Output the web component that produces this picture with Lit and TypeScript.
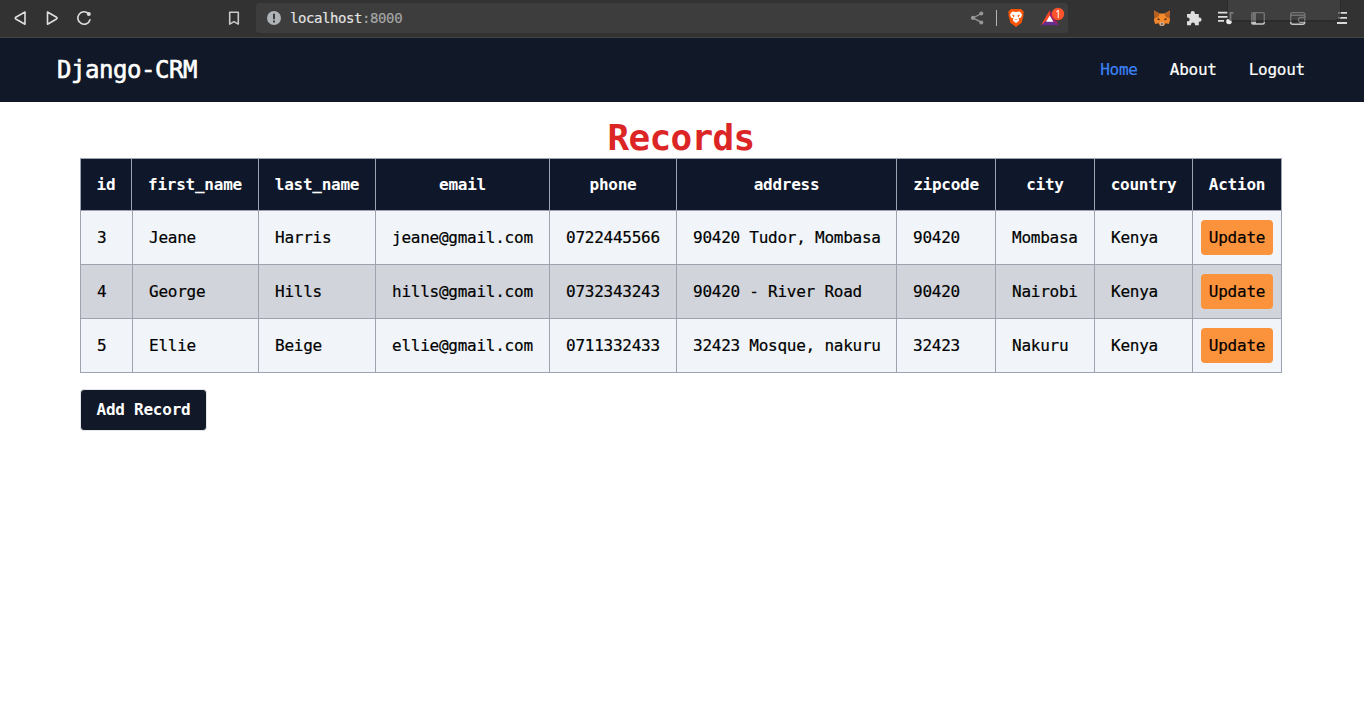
import { LitElement, html, css } from "lit";
import { customElement } from "lit/decorators.js";

@customElement("browser-bar")
class BrowserBar extends LitElement {
  static styles = css`
    :host { display: block; }
    .bar { position: relative; box-sizing: border-box; height: 38px; background: #323232; border-bottom: 1px solid #454545; display: flex; align-items: flex-start; padding-top: 3px; }
    svg { display: block; flex: none; }
    .nav { width: 256px; height: 30px; flex: none; }
    .address { width: 812px; height: 30px; border-radius: 4px; background: #3d3d3d; display: flex; align-items: center; justify-content: space-between; }
    .site { display: flex; align-items: center; gap: 9px; padding-left: 11px; }
    .url { font: 14px/18px "DejaVu Sans Mono", monospace; letter-spacing: -0.42px; color: #e4e4e4; -webkit-text-stroke: .15px currentColor; }
    .port { color: #a6a6a6; }
    .tab { position: absolute; left: 1227px; top: -5px; width: 112px; height: 25px; background: #484746; border: solid #2a2a2a; border-width: 0 1px 2px; border-radius: 0 0 7px 7px; opacity: .65; }
    .badge { font: 10px "Noto Sans", sans-serif; }
  `;
  render() {
    return html`<div class="bar">
      <svg class="nav" viewBox="0 3 256 30" fill="none" stroke="#dedede" stroke-width="1.6" stroke-linejoin="round" stroke-linecap="round">
        <path d="M25 12v12.2L15.8 19q-1.2-.9 0-1.8z"/>
        <path d="M47.5 12v12.2l9-5.2q1.2-.9 0-1.8z"/>
        <path d="M88.5 13.7A6.2 6.2 0 1 0 90 19.7"/><circle cx="88.8" cy="14" r="2" fill="#dedede" stroke="none"/>
        <path d="M229.7 12.2h8.6v11.9L234 21.6l-4.3 2.5z" stroke="#c9c9c9"/>
      </svg>
      <div class="address">
        <div class="site">
          <svg width="14" height="14" viewBox="0 0 14 14"><circle cx="7" cy="7" r="7" fill="#adb3b7"/><path d="M6 2.8h2v5.4H6zM6 9.5h2v2H6z" fill="#3d3d3d"/></svg>
          <span class="url">localhost<span class="port">:8000</span></span>
        </div>
        <svg width="108" height="30" viewBox="960 3 108 30">
          <path d="M981.5 13.5l-8.5 4.4 8.5 4.5" fill="none" stroke="#979797" stroke-width="1.3"/>
          <g fill="#979797"><circle cx="981.3" cy="13.5" r="2"/><circle cx="973" cy="17.9" r="2.1"/><circle cx="981.3" cy="22.4" r="2"/></g>
          <path d="M996.5 10v16" stroke="#b5b5b5"/>
          <path d="M1011 9h10l3 3-.8 2 .4 1.2-2 7.6-5.6 4.2-5.6-4.2-2-7.6.4-1.2-.8-2z" fill="#fb5406"/>
          <path d="M1012.2 11.4l3.8.7 3.8-.7 2.2 3-1 3-2.5 1.2.7 2-3.2 2.6-3.2-2.6.7-2-2.5-1.2-1-3z" fill="#fff"/>
          <path d="M1011.8 14.5l2.8.9-.8 2zM1020.2 14.5l-2.8.9.8 2zM1014.2 20l1.8-.8 1.8.8" fill="#fb5406"/>
          <path d="M1049.8 10l-8.8 15.3 9-4.4z" fill="#ff4724"/><path d="M1041 25.3h18l-5-4.5h-8z" fill="#662d91"/><path d="M1049.8 10l9.2 15.3-6-4-3.2-5.7z" fill="#9e1f63"/><path d="M1049.8 15.6l3.7 6.2h-7.4z" fill="#fff"/>
          <circle cx="1058" cy="14" r="6.2" fill="#fb542b"/><text class="badge" x="1058" y="17.6" text-anchor="middle" fill="#fff">1</text>
        </svg>
      </div>
      <svg width="296" height="30" viewBox="1068 3 296 30">
        <path d="M1154 10.5l5.5 3h5l5.5-3-.7 6.5.8 3-1.2 4-3.4-.8-1.3 2.3h-4.4l-1.3-2.3-3.4.8-1.2-4 .8-3z" fill="#f0852c"/>
        <path d="M1154 10.5l6 3.7-2.8 3.4-2.8.4.3-1.7zM1170 10.5l-6 3.7 2.8 3.4 2.8.4-.3-1.7z" fill="#b7601f"/>
        <path d="M1159.7 14h4.6l1 5-1.7 4h-3.2l-1.7-4z" fill="#f58b2c"/><path d="M1160 22.5h4l-.4 3.2h-3.2z" fill="#d0c3b8"/><path d="M1160.9 23.4h2.2v1.2h-2.2zM1157.6 18.3l2.2.8-.6 1.1-1.7-.7zM1166.4 18.3l-2.2.8.6 1.1 1.7-.7z" fill="#302019"/>
        <path d="M1187 14h3.6v-.9a2 2 0 0 1 4.2 0v.9h4v3.6h.7a2.1 2.1 0 0 1 0 4.2h-.7v3.5h-3.8v-.9a2 2 0 0 0-4 0v.9h-4v-4h.8a1.8 1.8 0 0 0 0-3.7h-.8z" fill="#dedede"/>
        <g fill="none" stroke="#dedede" stroke-width="1.7"><path d="M1218 12.7h10M1218 16.8h10M1218 20.8h6"/><path d="M1230.5 21.5v-8.7h3"/></g><circle cx="1229" cy="21.5" r="2.8" fill="#eee"/>
        <g fill="none" stroke="#c8c8c8" stroke-width="1.4"><rect x="1251.7" y="12.6" width="12.6" height="11.4" rx="1.5"/><path d="M1254.2 13v11" stroke-width="3.5"/><rect x="1290.7" y="12.6" width="14" height="11.6" rx="2"/><path d="M1291 15.3h12q2 0 2 2M1305 17.5h-4.3a2.3 2.3 0 0 0 0 4.6h4.3"/></g>
        <path d="M1338 12.8h9M1338 17.9h9M1337 23h10" stroke="#d8d8d8" stroke-width="1.8"/>
      </svg>
      <div class="tab"></div>
    </div>`;
  }
}

@customElement("app-root")
class AppRoot extends LitElement {
  static styles = css`
    :host { display: block; height: 709px; overflow: hidden; background: #fff; color: #000; font: 16px/24px "DejaVu Sans Mono", monospace; letter-spacing: -0.0155em; }
    .nav { height: 64px; box-sizing: border-box; background: #111827; color: #fff; display: flex; align-items: center; justify-content: space-between; padding: 0 59px 0 57px; }
    .brand { font-size: 24px; line-height: 32px; letter-spacing: -0.45px; -webkit-text-stroke: .6px #fff; }
    .links { display: flex; gap: 32px; -webkit-text-stroke: .2px currentColor; }
    .active { color: #3b82f6; }
    .main { padding: 16px 82px 0 80px; }
    .title { margin: 0; color: #dc2626; font-size: 36px; line-height: 40px; font-weight: 700; text-align: center; letter-spacing: -0.7px; }
    .table { display: block; width: 1202px; box-sizing: border-box; border: solid #9ca3af; border-width: 1px 0 0 1px; }
    .head, .body { display: block; }
    .body { -webkit-text-stroke: .2px currentColor; }
    .row { display: grid; grid-template-columns: 52px 126px 117px 174px 127px 220px 99px 99px 98px 89px; height: 54px; background: #f1f5f9; }
    .row.header { grid-template-columns: 51px 127px 117px 174px 127px 220px 99px 99px 98px 89px; height: 52px; background: #0f172a; color: #fff; }
    .row.even { background: #d1d5db; }
    .cell { display: flex; align-items: center; padding: 0 0 0 16px; border: solid #9ca3af; border-width: 0 1px 1px 0; white-space: nowrap; }
    .header .cell { justify-content: center; padding: 0; font-weight: 700; }
    .cell.action { padding: 0; justify-content: center; }
    .update { width: 72px; height: 35px; border: 0; padding: 0; border-radius: 4px; background: #fb923c; color: #000; font: inherit; letter-spacing: inherit; }
    .add { display: block; width: 127px; height: 42px; margin-top: 16px; padding: 0; background: #111827; color: #fff; border: 1px solid #e5e7eb; border-radius: 4px; font: inherit; font-weight: 700; letter-spacing: inherit; }
  `;
  columns = ["id", "first_name", "last_name", "email", "phone", "address", "zipcode", "city", "country", "Action"];
  records = [
    ["3", "Jeane", "Harris", "jeane@gmail.com", "0722445566", "90420 Tudor, Mombasa", "90420", "Mombasa", "Kenya"],
    ["4", "George", "Hills", "hills@gmail.com", "0732343243", "90420 - River Road", "90420", "Nairobi", "Kenya"],
    ["5", "Ellie", "Beige", "ellie@gmail.com", "0711332433", "32423 Mosque, nakuru", "32423", "Nakuru", "Kenya"],
  ];
  render() {
    return html`<browser-bar></browser-bar>
      <nav class="nav"><span class="brand">Django-CRM</span><div class="links"><span class="active">Home</span><span>About</span><span>Logout</span></div></nav>
      <main class="main">
        <h1 class="title">Records</h1>
        <table class="table">
          <thead class="head"><tr class="row header">${this.columns.map((c) => html`<th class="cell">${c}</th>`)}</tr></thead>
          <tbody class="body">${this.records.map((r, i) => html`<tr class="row ${i % 2 ? "even" : ""}">${r.map((v) => html`<td class="cell">${v}</td>`)}<td class="cell action"><button class="update">Update</button></td></tr>`)}</tbody>
        </table>
        <button class="add">Add Record</button>
      </main>`;
  }
}
